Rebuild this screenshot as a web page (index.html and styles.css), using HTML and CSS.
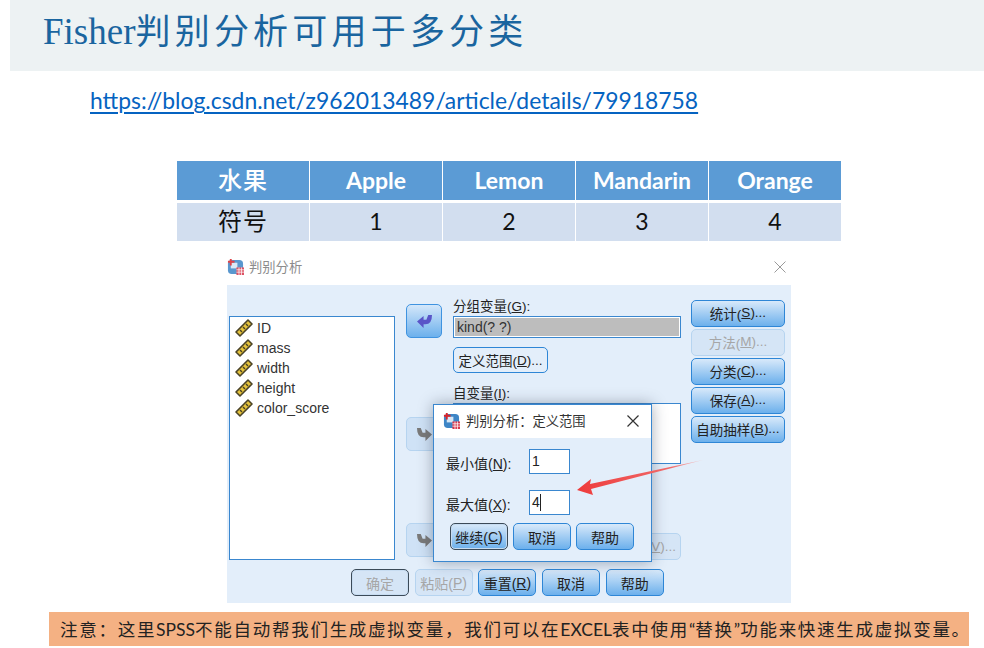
FILE: index.html
```html
<!DOCTYPE html>
<html>
<head>
	<meta charset="utf-8">
	<title>Fisher判别分析可用于多分类</title>
	<link rel="stylesheet" href="styles.css">
</head>
<body>
	<svg class="defs" width="0" height="0">
		<symbol id="ruler" viewBox="0 0 18 18">
			<path d="M1 13 L13 1 L17 5 L5 17 Z" fill="#e3c13c" stroke="#4a4326" stroke-width="1.6" stroke-linejoin="round"/>
			<path d="M5 11 l2 2 M8 8 l2 2 M11 5 l2 2" stroke="#4a4326" stroke-width="1.4"/>
		</symbol>
		<symbol id="back" viewBox="0 0 18 16">
			<path d="M1 8 L8 2 V6 H11 L13 1 H17 Q17 11 10 11 H8 V15 Z" fill="currentColor"/>
		</symbol>
		<symbol id="app" viewBox="0 0 18 18">
			<rect x="1" y="2" width="16" height="15" rx="4" fill="#3d85c6"/>
			<rect x="4" y="5" width="7" height="6" fill="#d5e6f5"/>
			<path d="M1 4 H8 M4 1 V8" stroke="#d8232a" stroke-width="2"/>
			<rect x="10" y="10" width="8" height="8" fill="#d8354a"/>
			<path d="M10 12.5 H18 M10 15 H18 M12.7 10 V18 M15.3 10 V18" stroke="#fff" stroke-width=".8"/>
		</symbol>
	</svg>

	<div class="header"><h1><span class="latin">Fisher</span>判别分析可用于多分类</h1></div>
	<div class="link-row"><a href="#">https://blog.csdn.net/z962013489/article/details/79918758</a></div>

	<div class="fruit">
		<div class="th cjk">水果</div>
		<div class="th">Apple</div>
		<div class="th">Lemon</div>
		<div class="th">Mandarin</div>
		<div class="th">Orange</div>
		<div class="td cjk">符号</div>
		<div class="td">1</div>
		<div class="td">2</div>
		<div class="td">3</div>
		<div class="td">4</div>
	</div>

	<div class="dialog">
		<div class="titlebar">
			<svg class="app-icon faded"><use href="#app"/></svg>
			<span class="title-text">判别分析</span>
			<svg class="close-icon" viewBox="0 0 12 12"><path d="M0.5 0.5 L11.5 11.5 M11.5 0.5 L0.5 11.5"/></svg>
		</div>
		<div class="panel">
			<div class="panel-main">
				<ul class="varlist">
					<li><svg class="ruler"><use href="#ruler"/></svg>ID</li>
					<li><svg class="ruler"><use href="#ruler"/></svg>mass</li>
					<li><svg class="ruler"><use href="#ruler"/></svg>width</li>
					<li><svg class="ruler"><use href="#ruler"/></svg>height</li>
					<li><svg class="ruler"><use href="#ruler"/></svg>color_score</li>
				</ul>
				<div class="arrows">
					<div class="arrow-btn"><svg class="back"><use href="#back"/></svg></div>
					<div class="arrow-btn off second"><svg class="back flip"><use href="#back"/></svg></div>
					<div class="arrow-btn off third"><svg class="back flip"><use href="#back"/></svg></div>
				</div>
				<div class="middle">
					<div class="lbl">分组变量(<u>G</u>):</div>
					<div class="group-field"><span>kind(? ?)</span></div>
					<div class="btn define">定义范围(<u>D</u>)...</div>
					<div class="lbl second-lbl">自变量(<u>I</u>):</div>
					<div class="indep-box"></div>
					<div class="btn off value-btn">值(<u>V</u>)...</div>
				</div>
				<div class="side">
					<div class="btn">统计(<u>S</u>)...</div>
					<div class="btn off">方法(<u>M</u>)...</div>
					<div class="btn">分类(<u>C</u>)...</div>
					<div class="btn">保存(<u>A</u>)...</div>
					<div class="btn">自助抽样(<u>B</u>)...</div>
				</div>
			</div>
			<div class="panel-bottom">
				<div class="btn off dark">确定</div>
				<div class="btn off">粘贴(<u>P</u>)</div>
				<div class="btn">重置(<u>R</u>)</div>
				<div class="btn">取消</div>
				<div class="btn">帮助</div>
			</div>
		</div>

		<div class="subdialog">
			<div class="sub-title">
				<svg class="app-icon"><use href="#app"/></svg>
				<span class="sub-text">判别分析：定义范围</span>
				<svg class="close-icon dark" viewBox="0 0 12 12"><path d="M0.5 0.5 L11.5 11.5 M11.5 0.5 L0.5 11.5"/></svg>
			</div>
			<div class="sub-body">
				<div class="sub-row">
					<span class="sub-lbl">最小值(<u>N</u>):</span>
					<div class="num">1</div>
				</div>
				<div class="sub-row">
					<span class="sub-lbl">最大值(<u>X</u>):</span>
					<div class="num caret">4</div>
				</div>
				<div class="sub-btns">
					<div class="btn dark">继续(<u>C</u>)</div>
					<div class="btn">取消</div>
					<div class="btn">帮助</div>
				</div>
			</div>
		</div>

		<svg class="red-arrow" width="130" height="40" viewBox="0 0 130 40">
			<defs>
				<linearGradient id="fade" x1="0" x2="1" y1="0" y2="0">
					<stop offset="0" stop-color="#ee3b3b"/>
					<stop offset=".75" stop-color="#f06a6a"/>
					<stop offset="1" stop-color="#f7b5b5" stop-opacity=".7"/>
				</linearGradient>
			</defs>
			<path d="M2 33 L16 22 L15 27 L128 3 L16 32 L18 38 Z" fill="url(#fade)"/>
		</svg>
	</div>

	<div class="note">注意：这里<span class="latin-note">SPSS</span>不能自动帮我们生成虚拟变量，我们可以在<span class="latin-note">EXCEL</span>表中使用<span class="latin-note">“</span>替换<span class="latin-note">”</span>功能来快速生成虚拟变量。</div>
</body>
</html>
```

FILE: styles.css
```css
* {
	box-sizing: border-box;
}

html, body {
	margin: 0;
	padding: 0;
}

body {
	width: 984px;
	height: 648px;
	overflow: hidden;
	background: #fff;
	font-family: "Liberation Sans", "Noto Sans CJK SC", sans-serif;
}

.defs {
	position: absolute;
}

.header {
	margin-left: 10px;
	height: 71px;
	background: #edf2f3;
	padding: 8px 0 0 33px;
}

.header h1 {
	margin: 0;
	font-family: "Liberation Serif", "Noto Sans CJK SC", serif;
	font-weight: 400;
	font-size: 35px;
	line-height: 48px;
	letter-spacing: 4.2px;
	color: #1a659f;
}

.header .latin {
	font-size: 37px;
	letter-spacing: 0;
}

.link-row {
	padding: 14px 0 0 90px;
	height: 90px;
	font-family: "Lato", sans-serif;
	font-size: 22.9px;
	line-height: 30px;
}

.link-row a {
	color: #0563c1;
	text-decoration-thickness: 2px;
	text-underline-offset: 3px;
}

.fruit {
	margin-left: 177px;
	width: 664px;
	display: grid;
	grid-template-columns: repeat(5, 132px);
	grid-template-rows: 39px 38px;
	column-gap: 1px;
	row-gap: 3px;
	font-family: "Lato", "Noto Sans CJK SC", sans-serif;
}

.th, .td {
	display: flex;
	align-items: center;
	justify-content: center;
	padding-bottom: 2px;
	font-size: 23px;
}

.th {
	background: #5b9bd5;
	color: #fff;
	font-weight: 700;
}

.td {
	background: #d2deef;
	color: #111;
}

.cjk {
	padding-bottom: 5px;
	font-size: 24px;
	font-family: "Noto Sans CJK SC", sans-serif;
	letter-spacing: 1px;
}

.th.cjk {
	font-weight: 500;
}

.dialog {
	position: relative;
	margin: 0 0 0 227px;
	width: 564px;
	color: #222;
	font-size: 13px;
}

.titlebar {
	height: 44px;
	display: flex;
	align-items: center;
	padding-top: 7px;
}

.app-icon {
	width: 17px;
	height: 17px;
}

.faded {
	opacity: .85;
}

.title-text {
	margin-left: 5px;
	color: #8c8c8c;
	font-size: 13.3px;
}

.close-icon {
	width: 12px;
	height: 12px;
	margin-left: auto;
	margin-right: 5px;
	fill: none;
	stroke: #9a9a9a;
	stroke-width: 1;
}

.close-icon.dark {
	stroke: #333;
	stroke-width: 1.2;
	margin-right: 12px;
}

.panel {
	height: 318px;
	background: #e3eefa;
	padding-top: 15px;
}

.panel-main {
	display: flex;
	height: 260px;
}

.varlist {
	list-style: none;
	margin: 16px 0 0 2px;
	padding: 1px 0 0 5px;
	width: 166px;
	height: 244px;
	background: #fff;
	border: 1px solid #3a87cf;
}

.varlist li {
	height: 20px;
	display: flex;
	align-items: center;
	color: #333;
	font-size: 14px;
}

.ruler {
	width: 18px;
	height: 18px;
	margin-right: 4px;
}

.arrows {
	width: 36px;
	margin-left: 11px;
	padding-top: 4px;
	display: flex;
	flex-direction: column;
}

.arrow-btn {
	width: 36px;
	height: 34px;
	display: flex;
	align-items: center;
	justify-content: center;
	border: 1px solid #3f93e0;
	border-radius: 5px;
	background: linear-gradient(#d4e7fa, #6cb0ec);
	color: #5a55c8;
}

.arrow-btn.off {
	border-color: #b6d4f0;
	background: #cfe2f6;
	color: #7a7a7a;
}

.arrow-btn.second {
	margin-top: 79px;
}

.arrow-btn.third {
	margin-top: 72px;
}

.back {
	width: 17px;
	height: 15px;
}

.back.flip {
	transform: scaleX(-1);
}

.middle {
	position: relative;
	width: 228px;
	margin-left: 11px;
	display: flex;
	flex-direction: column;
	align-items: flex-start;
}

.lbl {
	height: 16px;
	line-height: 14px;
	font-size: 13.5px;
}

.group-field {
	width: 228px;
	height: 22px;
	background: #fff;
	border: 1px solid #3a87cf;
	padding: 1px;
	font-size: 14px;
}

.group-field span {
	display: block;
	height: 18px;
	line-height: 19px;
	background: #bdbdbd;
	color: #333;
	padding-left: 2px;
}

.btn {
	height: 27px;
	display: flex;
	align-items: center;
	justify-content: center;
	border: 1px solid #2e86d6;
	border-radius: 5px;
	background: linear-gradient(#d8e9fa, #6cb0ec);
	color: #222;
	font-size: 13.5px;
	white-space: nowrap;
}

.btn.off {
	border-color: #b6d4f0;
	background: #d5e5f6;
	color: #a6a6a6;
}

.btn.dark {
	border-color: #3b4a58;
	box-shadow: inset 0 0 0 1px #c7dcf1;
}

.define {
	width: 95px;
	margin-top: 9px;
	background: #e3eefa;
}

.second-lbl {
	margin-top: 14px;
}

.indep-box {
	width: 228px;
	height: 62px;
	background: #fff;
	border: 1px solid #3a87cf;
}

.value-btn {
	width: 100px;
	margin-top: 69px;
	align-self: flex-end;
	justify-content: flex-end;
	padding-right: 4px;
}

.side {
	width: 94px;
	margin-left: 10px;
	display: flex;
	flex-direction: column;
	gap: 2px;
}

.side .btn {
	padding-bottom: 2px;
}

.panel-bottom {
	display: flex;
	gap: 5.7px;
	margin-top: 9px;
	padding-left: 124px;
}

.panel-bottom .btn {
	width: 58px;
	font-size: 14px;
}

.subdialog {
	position: absolute;
	left: 206px;
	top: 163px;
	width: 219px;
	height: 158px;
	background: #e3eefa;
	border: 1px solid #3a87cf;
	box-shadow: 0 0 14px rgba(40, 50, 70, .4);
}

.sub-title {
	height: 33px;
	background: #fff;
	display: flex;
	align-items: center;
	padding: 0 0 2px 9px;
}

.sub-text {
	margin-left: 6px;
	font-size: 13.3px;
	color: #333;
}

.sub-body {
	padding: 11px 0 0 12px;
}

.sub-row {
	display: flex;
	align-items: center;
	height: 25px;
	margin-bottom: 16px;
}

.sub-lbl {
	width: 83px;
	padding-top: 3px;
	font-size: 14px;
}

.num {
	width: 41px;
	height: 25px;
	line-height: 23px;
	background: #fff;
	border: 1px solid #3a87cf;
	padding-left: 2px;
	font-size: 14px;
}

.caret::after {
	content: "";
	display: inline-block;
	width: 1px;
	height: 17px;
	background: #222;
	vertical-align: -4px;
}

.sub-btns {
	display: flex;
	gap: 5px;
	margin-top: -8px;
	padding-left: 4px;
}

.sub-btns .btn {
	width: 58px;
	font-size: 14px;
}

.red-arrow {
	position: absolute;
	left: 348px;
	top: 216px;
}

.note {
	position: absolute;
	left: 49px;
	top: 612px;
	width: 920px;
	height: 34px;
	background: #f4b183;
	padding-left: 11px;
	line-height: 34px;
	font-family: "Noto Sans CJK SC", sans-serif;
	font-size: 17.5px;
	letter-spacing: 1.72px;
	color: #222;
	white-space: nowrap;
}

.latin-note {
	font-family: "Lato", sans-serif;
	letter-spacing: 0;
}
```
